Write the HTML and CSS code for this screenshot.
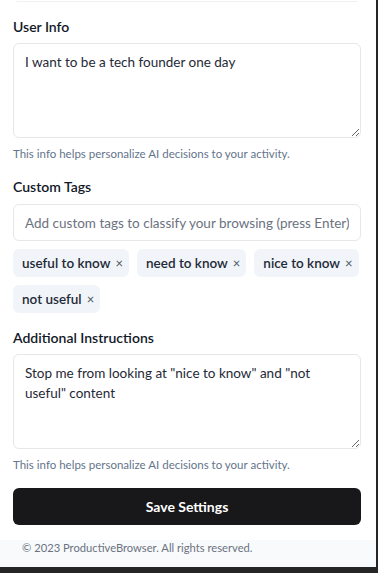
FILE: index.html
```html
<!DOCTYPE html>
<html lang="en">
<head>
  <meta charset="UTF-8" />
  <meta name="viewport" content="width=device-width, initial-scale=1.0"/>
  <title>Settings</title>
  <link rel="stylesheet" href="styles.css">
</head>
<body>
  <div class="popup">
    <div class="content">
      <!-- bottom edge of the field above, scrolled out of view -->
      <div class="prev-field"></div>

      <div class="section">
        <label class="label" for="userInfo">User Info</label>
        <textarea id="userInfo" class="field area">I want to be a tech founder one day</textarea>
        <p class="hint">This info helps personalize AI decisions to your activity.</p>
      </div>

      <div class="section">
        <label class="label" for="tagInput">Custom Tags</label>
        <input id="tagInput" class="field input" type="text" placeholder="Add custom tags to classify your browsing (press Enter)" />
        <div class="tags">
          <span class="tag">useful to know<span class="tag-x">×</span></span>
          <span class="tag">need to know<span class="tag-x">×</span></span>
          <span class="tag">nice to know<span class="tag-x">×</span></span>
          <span class="tag">not useful<span class="tag-x">×</span></span>
        </div>
      </div>

      <div class="section">
        <label class="label" for="extra">Additional Instructions</label>
        <textarea id="extra" class="field area">Stop me from looking at "nice to know" and "not useful" content</textarea>
        <p class="hint">This info helps personalize AI decisions to your activity.</p>
      </div>

      <button class="save-btn">Save Settings</button>
    </div>

    <footer class="footer">© 2023 ProductiveBrowser. All rights reserved.</footer>
  </div>
</body>
</html>
```

FILE: styles.css
```css
html {
  background: #262626;
}

body {
  margin: 0;
  font-family: Lato, "Noto Sans", sans-serif;
  color: #111827;
}

.popup {
  width: 376px;
  height: 567px;
  background: #fff;
  display: flex;
  flex-direction: column;
  overflow: hidden;
}

.content {
  flex: 1;
  padding: 0 15px 0 13px;
  display: flex;
  flex-direction: column;
}

.prev-field {
  height: 1px;
  margin: 0 3px;
  border-bottom: 1px solid #eef0f3;
  border-radius: 0 0 6px 6px;
}

.section {
  display: flex;
  flex-direction: column;
  margin-top: 15px;
}

.label {
  font-size: 14px;
  line-height: 20px;
  font-weight: 600;
  margin-bottom: 6px;
}

.field {
  box-sizing: border-box;
  width: 100%;
  border: 1px solid #e5e7eb;
  border-radius: 6px;
  font-family: inherit;
  font-size: 13.5px;
  color: #1f2937;
  background: #fff;
  outline: none;
}

.area {
  height: 95px;
  padding: 8px 11px;
  line-height: 20px;
  resize: vertical;
}

.input {
  height: 37px;
  padding: 0 11px;
  margin-top: 1px;
}

.input::placeholder {
  color: #6b7280;
}

.hint {
  margin: 8px 0 0;
  font-size: 11.5px;
  line-height: 16px;
  color: #64748b;
}

.tags {
  display: flex;
  flex-wrap: wrap;
  gap: 8px;
  margin-top: 8px;
}

.tag {
  display: inline-flex;
  align-items: center;
  height: 28px;
  padding: 0 6px 0 9px;
  background: #f1f5f9;
  border-radius: 6px;
  font-size: 13.5px;
  font-weight: 600;
  color: #1f2937;
}

.tag-x {
  margin-left: 5px;
  font-size: 13px;
  font-weight: 400;
  color: #4b5563;
}

.save-btn {
  margin-top: 15px;
  height: 37px;
  border: none;
  border-radius: 6px;
  background: #18181b;
  color: #fff;
  font-family: inherit;
  font-size: 14px;
  font-weight: 700;
  cursor: pointer;
}

.footer {
  margin-top: 15px;
  height: 27px;
  padding: 0 22px;
  background: #f8fafc;
  font-size: 11.2px;
  line-height: 16px;
  color: #6b7280;
}
```
